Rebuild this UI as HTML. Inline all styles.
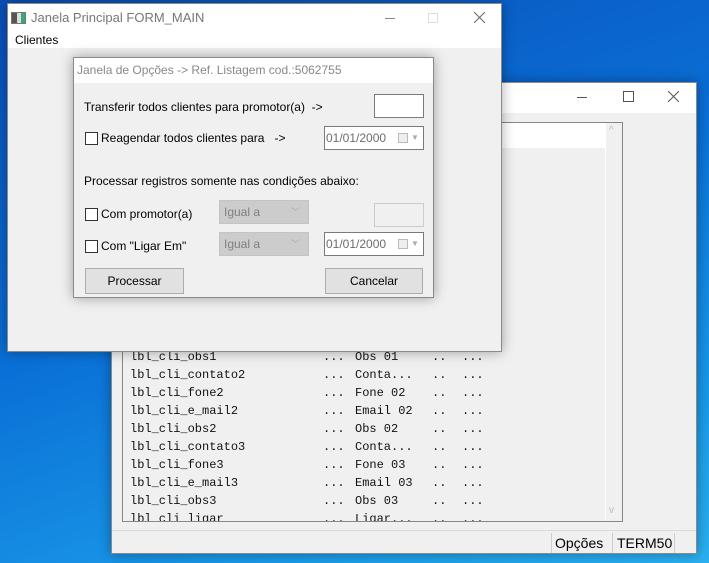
<!DOCTYPE html>
<html><head><style>
*{margin:0;padding:0;box-sizing:border-box}
body{width:709px;height:563px;overflow:hidden;position:relative;font-family:"Liberation Sans",sans-serif;font-size:12px;color:#000;
background:linear-gradient(160deg,#0a4fb8 0%,#0a6fd6 45%,#1a9ae8 80%,#2bb0f0 100%);}
.abs{position:absolute}
.win{background:#f0f0f0;border:1px solid #8a8a8a;box-shadow:0 0 12px rgba(0,0,0,.35)}
.mono{font-family:"Liberation Mono",monospace;font-size:12px;color:#111;line-height:18px;white-space:pre;position:absolute;top:225px}
.cb{position:absolute;width:13px;height:13px;border:1px solid #333;background:#fff}
.btn{position:absolute;background:#e1e1e1;border:1px solid #adadad;text-align:center;line-height:24px}
.combo{position:absolute;background:#cccccc;border:1px solid #c4c4c4;color:#808080;padding-left:4px;line-height:20px}
.date{position:absolute;background:#fff;border:1px solid #7a7a7a;color:#6d6d6d;padding-left:1px;line-height:22px}
</style></head><body>

<!-- background window -->
<div class="abs win" style="left:111px;top:82px;width:586px;height:472px">
  <div class="abs" style="left:0;top:0;width:584px;height:30px;background:#fff"></div>
  <div class="abs" style="left:465px;top:14px;width:10px;height:1px;background:#555"></div>
  <div class="abs" style="left:511px;top:8px;width:11px;height:11px;border:1px solid #555"></div>
  <svg class="abs" style="left:556px;top:8px" width="11" height="11"><path d="M0 0L11 11M11 0L0 11" stroke="#555" stroke-width="1"/></svg>
  <div class="abs" style="left:10px;top:39px;width:501px;height:400px;border:1px solid #828790;background:#f0f0f0;overflow:hidden">
    <div class="abs" style="left:0;top:0;width:482px;height:25px;background:#fff"></div>
    <div class="abs" style="left:482px;top:0;width:17px;height:398px;background:#f0f0f0;border-left:1px solid #fff"></div>
    <div class="abs" style="left:486px;top:2px;color:#bbb;font-size:10px">^</div>
    <div class="abs" style="left:486px;top:382px;color:#bbb;font-size:10px">v</div>
    <div class="mono" style="left:7px">lbl_cli_obs1
lbl_cli_contato2
lbl_cli_fone2
lbl_cli_e_mail2
lbl_cli_obs2
lbl_cli_contato3
lbl_cli_fone3
lbl_cli_e_mail3
lbl_cli_obs3
lbl_cli_ligar</div>
    <div class="mono" style="left:200px">...
...
...
...
...
...
...
...
...
...</div>
    <div class="mono" style="left:232px">Obs 01
Conta...
Fone 02
Email 02
Obs 02
Conta...
Fone 03
Email 03
Obs 03
Ligar...</div>
    <div class="mono" style="left:309px">..
..
..
..
..
..
..
..
..
..</div>
    <div class="mono" style="left:339px">...
...
...
...
...
...
...
...
...
...</div>
  </div>
  <div class="abs" style="left:0;top:447px;width:584px;height:1px;background:#dadada"></div>
  <div class="abs" style="left:439px;top:450px;width:1px;height:20px;background:#ccc"></div>
  <div class="abs" style="left:500px;top:450px;width:1px;height:20px;background:#ccc"></div>
  <div class="abs" style="left:562px;top:450px;width:1px;height:20px;background:#ccc"></div>
  <div class="abs" style="left:443px;top:452px;font-size:14px">Opções</div>
  <div class="abs" style="left:505px;top:452px;font-size:14px">TERM50</div>
</div>

<!-- main window -->
<div class="abs win" style="left:7px;top:3px;width:495px;height:349px">
  <div class="abs" style="left:0;top:0;width:493px;height:44px;background:#fff"></div>
  <div class="abs" style="left:3px;top:8px;width:15px;height:12px;border:1px solid #777;background:linear-gradient(90deg,#555 0 40%,#ddd 40% 70%,#3a7 70%)"></div>
  <div class="abs" style="left:23px;top:6px;font-size:13px;color:#777">Janela Principal FORM_MAIN</div>
  <div class="abs" style="left:377px;top:14px;width:10px;height:1px;background:#888"></div>
  <div class="abs" style="left:420px;top:9px;width:10px;height:10px;border:1px solid #ddd"></div>
  <svg class="abs" style="left:466px;top:8px" width="11" height="11"><path d="M0 0L11 11M11 0L0 11" stroke="#666" stroke-width="1"/></svg>
  <div class="abs" style="left:7px;top:29px;font-size:12px">Clientes</div>
</div>

<!-- dialog -->
<div class="abs win" style="left:73px;top:57px;width:361px;height:241px;font-size:12px">
  <div class="abs" style="left:0;top:0;width:359px;height:25px;background:#fff"></div>
  <div class="abs" style="left:3px;top:5px;color:#888">Janela de Opções -&gt; Ref. Listagem cod.:5062755</div>
  <div class="abs" style="left:10px;top:42px">Transferir todos clientes para promotor(a)&nbsp; -&gt;</div>
  <div class="abs" style="left:300px;top:36px;width:50px;height:24px;background:#fff;border:1px solid #7a7a7a"></div>
  <div class="cb" style="left:11px;top:74px"></div>
  <div class="abs" style="left:27px;top:73px">Reagendar todos clientes para&nbsp;&nbsp; -&gt;</div>
  <div class="date" style="left:250px;top:68px;width:100px;height:24px">01/01/2000<span style="position:absolute;left:73px;top:6px;width:10px;height:10px;border:1px solid #bbb;background:#eee"></span><span style="position:absolute;left:86px;top:0;color:#aaa;font-size:8px">▼</span></div>
  <div class="abs" style="left:10px;top:116px">Processar registros somente nas condições abaixo:</div>
  <div class="cb" style="left:11px;top:150px"></div>
  <div class="abs" style="left:27px;top:149px">Com promotor(a)</div>
  <div class="combo" style="left:145px;top:142px;width:90px;height:24px;line-height:22px">Igual a<span style="position:absolute;right:8px;top:0;font-size:9px;color:#aaa">﹀</span></div>
  <div class="abs" style="left:300px;top:145px;width:50px;height:24px;background:#f0f0f0;border:1px solid #ccc"></div>
  <div class="cb" style="left:11px;top:182px"></div>
  <div class="abs" style="left:27px;top:181px">Com "Ligar Em"</div>
  <div class="combo" style="left:145px;top:174px;width:90px;height:24px;line-height:22px">Igual a<span style="position:absolute;right:8px;top:0;font-size:9px;color:#aaa">﹀</span></div>
  <div class="date" style="left:250px;top:174px;width:100px;height:24px">01/01/2000<span style="position:absolute;left:73px;top:6px;width:10px;height:10px;border:1px solid #bbb;background:#eee"></span><span style="position:absolute;left:86px;top:0;color:#aaa;font-size:8px">▼</span></div>
  <div class="btn" style="left:11px;top:210px;width:99px;height:26px">Processar</div>
  <div class="btn" style="left:251px;top:210px;width:98px;height:26px">Cancelar</div>
</div>
</body></html>
